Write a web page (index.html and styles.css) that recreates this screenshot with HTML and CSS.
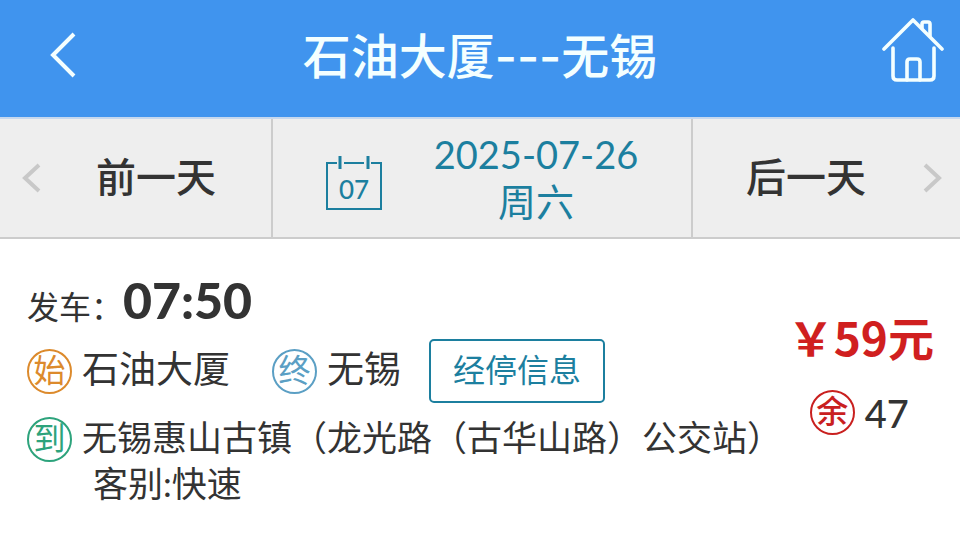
FILE: index.html
```
<!DOCTYPE html>
<html lang="zh-CN">

<head>
    <meta charset="UTF-8">
    <meta name="viewport" content="width=device-width, initial-scale=1">
    <title>石油大厦---无锡</title>
    <link rel="stylesheet" href="styles.css">
</head>

<body>
    <header class="top-bar">
        <a class="back" href="#" aria-label="返回">
            <svg width="30" height="48" viewBox="0 0 30 48" fill="none" stroke="currentColor" stroke-width="4">
                <path d="M26 3L5 24L26 45" />
            </svg>
        </a>
        <h1>石油大厦---无锡</h1>
        <a class="home" href="#" aria-label="首页">
            <svg width="62" height="66" viewBox="0 0 62 66" fill="none" stroke="currentColor" stroke-width="3.6" stroke-linecap="round" stroke-linejoin="round">
                <path d="M2 32L31 3L60 32" />
                <path d="M40 11V7Q40 5 42 5H46Q48 5 48 7V19" />
                <path d="M11 31V59Q11 63 15 63H48Q52 63 52 59V31" />
                <path d="M25 63V45Q25 42 28 42H35Q38 42 38 45V63" />
            </svg>
        </a>
    </header>

    <nav class="day-nav">
        <button type="button" class="day prev">
            <svg width="20" height="30" viewBox="0 0 20 30" fill="none" stroke="#c8c8c8" stroke-width="4">
                <path d="M17 2L3 15L17 28" />
            </svg>
            <span class="label">前一天</span>
        </button>
        <button type="button" class="day current">
            <svg class="calendar" width="56" height="54" viewBox="0 0 56 54" fill="none" stroke="currentColor" stroke-width="2">
                <path d="M11 7H1V53H55V7H45M18 7H38" />
                <path d="M14 0V13M42 0V13" stroke-width="3" />
                <text x="28" y="43" class="cal-day">07</text>
            </svg>
            <span class="date">2025-07-26<br>周六</span>
        </button>
        <button type="button" class="day next">
            <span class="label">后一天</span>
            <svg width="20" height="30" viewBox="0 0 20 30" fill="none" stroke="#c8c8c8" stroke-width="4">
                <path d="M3 2L17 15L3 28" />
            </svg>
        </button>
    </nav>

    <main class="trip">
        <div class="info">
            <div class="depart">发车：<strong>07:50</strong></div>
            <div class="stops">
                <span class="badge start">始</span>
                <span class="stop from">石油大厦</span>
                <span class="badge end">终</span>
                <span class="stop">无锡</span>
                <button type="button" class="via">经停信息</button>
            </div>
            <div class="arrive">
                <span class="badge to">到</span>
                <span class="stop">无锡惠山古镇（龙光路（古华山路）公交站）</span>
            </div>
            <div class="kind">客别:快速</div>
        </div>
        <div class="ticket">
            <div class="price">￥59元</div>
            <div class="left">
                <span class="badge remain">余</span>
                <span>47</span>
            </div>
        </div>
    </main>
</body>

</html>
```

FILE: styles.css
```
* {
    box-sizing: border-box;
}

body {
    margin: 0;
    font-family: Lato, "Noto Sans CJK SC", sans-serif;
    color: #333;
    background: #fff;
}

button {
    font-family: inherit;
    color: inherit;
    background: none;
    border: none;
    cursor: pointer;
}

svg {
    display: block;
    flex: none;
}

.top-bar {
    display: grid;
    grid-template-columns: 1fr auto 1fr;
    align-items: center;
    height: 117px;
    padding-bottom: 8px;
    background: #4094ee;
    color: #f4ffff;
}

.top-bar a {
    color: inherit;
}

.back {
    padding-left: 48px;
}

.home {
    justify-self: end;
    padding: 0 16px 10px 0;
}

h1 {
    margin: 0;
    padding-top: 4px;
    font-family: Inter, "Noto Sans CJK SC", sans-serif;
    font-size: 48px;
    font-weight: 500;
    line-height: 64px;
}

.day-nav {
    display: grid;
    grid-template-columns: 271fr 420fr 269fr;
    height: 122px;
    background: #eee;
    border-top: 2px solid #c6d8ee;
    border-bottom: 2px solid #ccc;
}

.day {
    display: flex;
    align-items: center;
    padding: 0;
    font-size: 40px;
    font-weight: 500;
}

.day + .day {
    border-left: 2px solid #ccc;
}

.label {
    padding-bottom: 6px;
}

.prev {
    gap: 54px;
    padding-left: 22px;
}

.next {
    justify-content: flex-end;
    gap: 56px;
    padding-right: 18px;
}

.current {
    justify-content: center;
    gap: 52px;
    color: #1c7f9f;
}

.calendar {
    margin-top: 10px;
}

.date {
    font-size: 38px;
    font-weight: 400;
    line-height: 47px;
}

.cal-day {
    font-size: 26px;
    fill: currentColor;
    stroke: none;
    text-anchor: middle;
}

.trip {
    display: flex;
    justify-content: space-between;
    padding: 32px 26px 32px 27px;
}

.depart {
    height: 64px;
    font-size: 32px;
    line-height: 58px;
}

.depart strong {
    font-size: 50px;
    font-weight: 900;
}

.stops,
.arrive {
    display: flex;
    align-items: center;
    gap: 10px;
}

.stops {
    height: 72px;
    font-size: 37px;
}

.arrive {
    height: 64px;
}

.stop {
    padding-bottom: 4px;
    line-height: 44px;
}

.from {
    margin-right: 32px;
}

.badge {
    width: 45px;
    height: 45px;
    border: 2px solid;
    border-radius: 50%;
    font-size: 32px;
    line-height: 38px;
    text-align: center;
}

.start {
    color: #dc8a2c;
}

.end {
    color: #5b9fc4;
}

.to {
    color: #2da37c;
}

.remain {
    color: #c9201f;
    font-weight: 500;
}

.via {
    height: 64px;
    margin-left: 18px;
    padding: 0 22px 6px;
    border: 2px solid #1c7f9f;
    border-radius: 5px;
    font-size: 32px;
    color: #1c7f9f;
}

.arrive,
.kind {
    font-size: 35px;
}

.kind {
    padding-left: 66px;
    line-height: 24px;
}

.ticket {
    padding-top: 33px;
}

.price {
    font-family: "Noto Sans CJK SC", sans-serif;
    font-size: 46px;
    font-weight: 700;
    line-height: 64px;
    color: #d01f1f;
}

.left {
    display: flex;
    align-items: center;
    gap: 10px;
    padding: 22px 0 0 22px;
    font-size: 38px;
    font-weight: 500;
    line-height: 44px;
}
```
